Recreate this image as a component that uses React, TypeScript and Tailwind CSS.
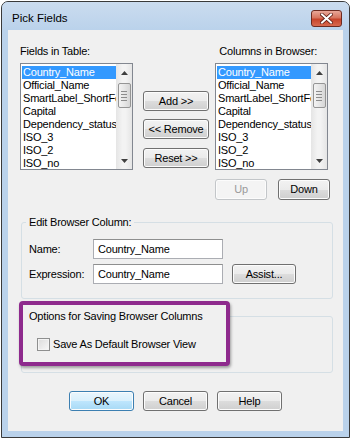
import React from 'react';

const LEFT_FIELDS = ['Country_Name', 'Official_Name', 'SmartLabel_ShortForm', 'Capital', 'Dependency_status', 'ISO_3', 'ISO_2', 'ISO_no'];
const RIGHT_FIELDS = ['Country_Name', 'Official_Name', 'SmartLabel_ShortForm', 'Capital', 'Dependency_status', 'ISO_3', 'ISO_2', 'ISO_no'];

const btnBase = 'flex items-center justify-center rounded-[3px] border text-[11px] leading-none shadow-[inset_0_0_0_1px_#fcfcfc]';
const btnNormal = 'border-[#707070] text-black bg-[linear-gradient(#f2f2f2_0%,#ebebeb_50%,#dddddd_50%,#cfcfcf_100%)]';
const btnDefault = 'border-[#3c7fb1] text-black bg-[linear-gradient(#eaf6fd_0%,#d9f0fc_50%,#bee6fd_50%,#a7d9f5_100%)]';
const btnDisabled = 'border-[#c3c6c9] text-[#9a9a9a] bg-[#f4f4f4]';

function Btn({ label, w, h = 20, kind = 'normal' }: { label: string; w: string; h?: number; kind?: 'normal' | 'default' | 'disabled' }) {
  const look = kind === 'default' ? btnDefault : kind === 'disabled' ? btnDisabled : btnNormal;
  return (
    <div className={`${btnBase} ${look} ${w} ${h === 21 ? 'h-[21px]' : 'h-[20px]'}`}>
      {label}
    </div>
  );
}

function ScrollBar() {
  return (
    <div className="w-[16px] h-full flex flex-col items-center bg-[linear-gradient(90deg,#e5e5e5,#f3f3f3_40%,#f3f3f3_60%,#e5e5e5)]">
      <div className="h-[17px] w-full flex items-center justify-center">
        <svg width="7" height="4" viewBox="0 0 7 4"><path d="M0 4 L3.5 0 L7 4 Z" fill="#404040" /></svg>
      </div>
      <div className="mt-[2px] w-[13px] h-[25px] rounded-[2px] border border-[#959595] bg-[linear-gradient(90deg,#f3f3f3,#e6e6e6_50%,#d6d6d6)] flex flex-col items-center justify-center gap-[2px]">
        <div className="w-[6px] h-[1px] bg-[#8c8c8c]" />
        <div className="w-[6px] h-[1px] bg-[#8c8c8c]" />
        <div className="w-[6px] h-[1px] bg-[#8c8c8c]" />
        <div className="w-[6px] h-[1px] bg-[#8c8c8c]" />
      </div>
      <div className="flex-1" />
      <div className="h-[17px] w-full flex items-center justify-center">
        <svg width="7" height="4" viewBox="0 0 7 4"><path d="M0 0 L3.5 4 L7 0 Z" fill="#404040" /></svg>
      </div>
    </div>
  );
}

function ListBox({ items }: { items: string[] }) {
  return (
    <div className="w-[113px] h-[107px] border border-[#828790] bg-white flex">
      <div className="flex-1 min-w-0 pl-[1px] pt-[2px] overflow-hidden">
        {items.map((it, i) => (
          <div
            key={it}
            className={`h-[13px] leading-[13px] pl-[1px] text-[11px] whitespace-nowrap overflow-hidden ${i === 0 ? 'bg-[#3399ff] text-white' : 'text-black'}`}
          >
            {it}
          </div>
        ))}
      </div>
      <ScrollBar />
    </div>
  );
}

export default function App() {
  return (
    <div className="w-[351px] h-[439px] bg-white pt-[1px] pl-[1px] font-['Liberation_Sans',Arial,sans-serif] text-[11px] tracking-[-0.2px] text-black">
      <div className="w-[349px] h-[437px] border border-[#3a3a3a] rounded-t-[7px] bg-[#bad2eb] flex flex-col">
        {/* title bar */}
        <div className="h-[28px] flex justify-between bg-[linear-gradient(#cbdcef,#bad2eb)] rounded-t-[6px]">
          <div className="pl-[10px] pt-[9px] leading-[14px] text-[11.5px] tracking-normal text-black">Pick Fields</div>
          <div className="mt-[8px] mr-[7px] w-[31px] h-[17px] rounded-[3px] border border-[#6d2b21] bg-[linear-gradient(#e9a899_0%,#d7755f_45%,#c7442b_55%,#d86a4f_100%)] flex items-center justify-center">
            <svg width="13" height="11" viewBox="0 0 13 11">
              <path d="M2 1.5 L11 9.5 M11 1.5 L2 9.5" stroke="#5a1a12" strokeWidth="3.6" strokeLinecap="square" />
              <path d="M2 1.5 L11 9.5 M11 1.5 L2 9.5" stroke="#ffffff" strokeWidth="2" strokeLinecap="square" />
            </svg>
          </div>
        </div>

        {/* client area */}
        <div className="relative mx-[6px] h-[401px] bg-[#f0f0f0]">
          <div className="flex justify-between pl-[12px] pr-[26px] pt-[15px] leading-[13px]">
            <span>Fields in Table:</span>
            <span>Columns in Browser:</span>
          </div>

          <div className="flex pl-[12px] mt-[5px]">
            <ListBox items={LEFT_FIELDS} />
            <div className="ml-[10px] w-[66px] flex flex-col pt-[28px]">
              <Btn label="Add >>" w="w-[66px]" />
              <div className="h-[8px]" />
              <Btn label="<< Remove" w="w-[66px]" />
              <div className="h-[9px]" />
              <Btn label="Reset >>" w="w-[66px]" />
            </div>
            <div className="ml-[6px]">
              <ListBox items={RIGHT_FIELDS} />
            </div>
          </div>

          <div className="flex pl-[207px] mt-[9px] gap-[11px]">
            <Btn label="Up" w="w-[52px]" h={21} kind="disabled" />
            <Btn label="Down" w="w-[52px]" h={21} />
          </div>

          {/* Edit Browser Column group */}
          <div className="ml-[13px] w-[312px] mt-[22px] border border-[#d5dfe5] rounded-[3px] pb-[14px]">
            <div className="-mt-[7px] ml-[4px] px-[3px] w-fit bg-[#f0f0f0] leading-[13px]">Edit Browser Column:</div>
            <div className="flex items-center pl-[7px] mt-[10px]">
              <span className="w-[64px]">Name:</span>
              <div className="w-[130px] h-[20px] border border-[#abadb3] border-t-[#8e8f8f] bg-white pl-[4px] flex items-center">Country_Name</div>
            </div>
            <div className="flex items-center pl-[7px] mt-[5px]">
              <span className="w-[64px]">Expression:</span>
              <div className="w-[130px] h-[20px] border border-[#abadb3] border-t-[#8e8f8f] bg-white pl-[4px] flex items-center">Country_Name</div>
              <div className="ml-[9px]">
                <Btn label="Assist..." w="w-[64px]" />
              </div>
            </div>
          </div>

          {/* Options group */}
          <div className="ml-[13px] w-[312px] mt-[17px] border border-[#d5dfe5] rounded-[3px] pb-[21px]">
            <div className="relative z-10 -mt-[7px] ml-[4px] px-[3px] w-fit bg-[#f0f0f0] leading-[13px]">Options for Saving Browser Columns</div>
            <div className="relative z-10 flex items-center pl-[15px] mt-[15px]">
              <div className="w-[13px] h-[13px] border border-[#8e8f8f] bg-[linear-gradient(135deg,#dcdcdc,#f8f8f8)] shadow-[inset_0_0_0_1px_#f4f4f4]" />
              <span className="ml-[3px] leading-[13px]">Save As Default Browser View</span>
            </div>
          </div>

          {/* annotation highlight */}
          <div className="absolute left-[11px] top-[271px] w-[211px] h-[65px] rounded-[4px] border-[4px] border-[#8e2a8d] bg-[#f0f0f0] shadow-[1px_2px_3px_rgba(0,0,0,0.35)]" />

          <div className="flex justify-center gap-[9px] mt-[18px]">
            <Btn label="OK" w="w-[65px]" kind="default" />
            <Btn label="Cancel" w="w-[65px]" />
            <Btn label="Help" w="w-[65px]" />
          </div>
        </div>
      </div>
    </div>
  );
}
